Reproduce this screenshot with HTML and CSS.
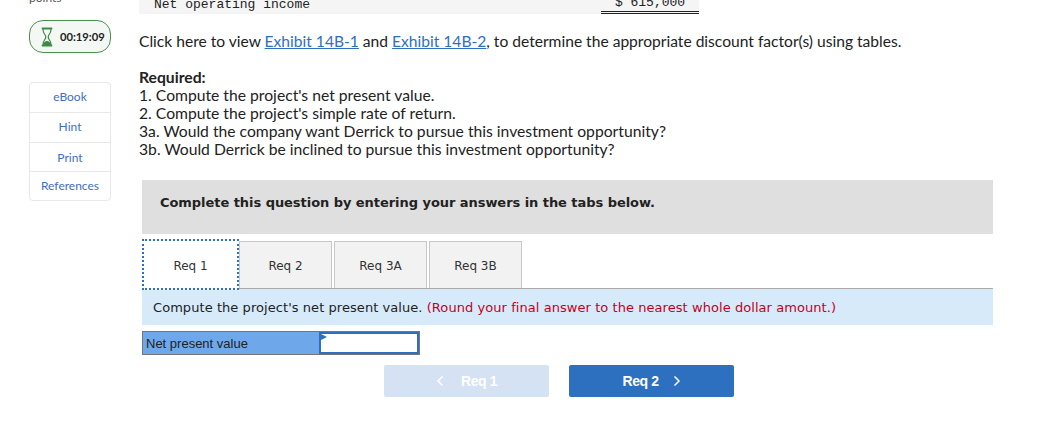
FILE: index.html
```html
<!DOCTYPE html>
<html lang="en">
<head>
    <meta charset="UTF-8">
    <title>Question</title>
    <link rel="stylesheet" href="styles.css">
</head>
<body>
    <div class="page">
        <div class="sidebar">
            <div class="points">points</div>
            <div class="timer">
                <svg class="hourglass" width="14" height="20" viewBox="0 0 14 20">
                    <path d="M2.500 1.500h9M2.500 18.500h9" stroke="#3d8a45" stroke-width="1.800" stroke-linecap="round" fill="none"/>
                    <path d="M3 2c0 2 .3 3.500 1.500 5s1.300 2 1.300 3-.1 1.500-1.300 3S3 16 3 18M11 2c0 2-.3 3.500-1.500 5s-1.300 2-1.300 3 .1 1.500 1.300 3 1.500 3 1.500 5" stroke="#3d8a45" stroke-width="1.200" fill="none"/>
                    <path d="M3 18c.3-2.500 2-3.800 4-4 2 .2 3.700 1.500 4 4z" fill="#3d8a45"/>
                </svg>
                <span>00:19:09</span>
            </div>
            <div class="tools">
                <a class="tool">eBook</a>
                <a class="tool">Hint</a>
                <a class="tool">Print</a>
                <a class="tool">References</a>
            </div>
        </div>

        <div class="main">
            <div class="income">
                <span>Net operating income</span>
                <span class="income-value">$ 615,000</span>
            </div>

            <p class="exhibits">Click here to view <a>Exhibit 14B-1</a> and <a>Exhibit 14B-2</a>, to determine the appropriate discount factor(s) using tables.</p>

            <div class="required">
                <strong>Required:</strong><br>
                1. Compute the project's net present value.<br>
                2. Compute the project's simple rate of return.<br>
                3a. Would the company want Derrick to pursue this investment opportunity?<br>
                3b. Would Derrick be inclined to pursue this investment opportunity?
            </div>

            <div class="complete">Complete this question by entering your answers in the tabs below.</div>

            <div class="tabs">
                <div class="tab active">Req 1</div>
                <div class="tab">Req 2</div>
                <div class="tab">Req 3A</div>
                <div class="tab">Req 3B</div>
            </div>

            <div class="prompt">Compute the project's net present value. <span class="note">(Round your final answer to the nearest whole dollar amount.)</span></div>

            <div class="answer">
                <div class="answer-label">Net present value</div>
                <div class="answer-input"></div>
            </div>

            <div class="nav">
                <div class="nav-btn disabled">
                    <svg width="8" height="12" viewBox="0 0 8 12"><path d="M6.500 1.500L2 6l4.500 4.500" stroke="#fff" stroke-width="1.500" fill="none"/></svg>
                    <span>Req 1</span>
                </div>
                <div class="nav-btn">
                    <span>Req 2</span>
                    <svg width="8" height="12" viewBox="0 0 8 12"><path d="M1.500 1.500L6 6l-4.500 4.500" stroke="#fff" stroke-width="1.500" fill="none"/></svg>
                </div>
            </div>
        </div>
    </div>
</body>
</html>
```

FILE: styles.css
```css
html, body {
    margin: 0;
    height: 448px;
    overflow: hidden;
    background-color: #fff;
}

body {
    font-family: Lato, "Open Sans", Arial, sans-serif;
    color: #222;
}

.page {
    display: flex;
}

.sidebar {
    width: 82px;
    margin-left: 29px;
    margin-right: 28px;
    flex-shrink: 0;
}

.points {
    height: 14px;
    margin-top: -9px;
    margin-bottom: 15px;
    font-size: 12px;
    line-height: 14px;
    color: #555;
}

.timer {
    display: flex;
    align-items: center;
    height: 31px;
    padding-left: 10px;
    gap: 6px;
    border: 1px solid #4a8f50;
    border-radius: 14px;
    background-color: #f4f8f4;
    font-size: 11.200px;
    font-weight: 700;
}

.tools {
    display: flex;
    flex-direction: column;
    margin-top: 29px;
    border: 1px solid #e8e8e8;
    border-radius: 4px;
}

.tool {
    height: 29px;
    line-height: 28px;
    text-align: center;
    font-size: 12px;
    color: #3e6fc0;
    border-bottom: 1px solid #e8e8e8;
}

.tool:nth-child(3) {
    height: 28px;
    line-height: 29px;
}

.tool:last-child {
    height: 28px;
    border-bottom: none;
}

.main {
    width: 854px;
    font-size: 15.700px;
}

.income {
    display: flex;
    justify-content: space-between;
    width: 560px;
    height: 17px;
    padding-left: 15px;
    box-sizing: border-box;
    margin-top: -3px;
    background-color: #f5f5f5;
    font-family: "Liberation Mono", monospace;
    font-size: 13px;
    line-height: 15px;
}

.income-value {
    width: 98px;
    height: 14px;
    text-align: center;
    border-bottom: 3px double #222;
    line-height: 11px;
}

.exhibits {
    margin: 18px 0 0;
    font-size: 15.600px;
    line-height: 18px;
}

.exhibits a {
    color: #2f6fbf;
    text-decoration: underline;
}

.required {
    margin-top: 18px;
    line-height: 18px;
}

.complete {
    width: 851px;
    height: 54px;
    box-sizing: border-box;
    margin: 22px 0 0 3px;
    padding: 15px 18px;
    background-color: #dfdfdf;
    font-family: "DejaVu Sans", Verdana, sans-serif;
    font-size: 13px;
    font-weight: 700;
    letter-spacing: -0.05px;
    line-height: 16px;
}

.tabs {
    display: flex;
    align-items: flex-end;
    gap: 2px;
    margin: 5px 0 0 3px;
    height: 49px;
    font-family: "DejaVu Sans", Verdana, sans-serif;
    font-size: 12px;
}

.tab {
    width: 93px;
    height: 47px;
    box-sizing: border-box;
    line-height: 48px;
    text-align: center;
    border: 1px solid #c8c8c8;
    border-bottom: none;
    background-color: #f2f2f2;
    color: #333;
}

.tab.active {
    position: relative;
    width: 97px;
    height: 51px;
    margin-bottom: -2px;
    margin-right: -2px;
    line-height: 50px;
    background-color: #fff;
    border: 2px dotted #2f6fbf;
}

.prompt {
    width: 851px;
    height: 37px;
    box-sizing: border-box;
    margin-left: 3px;
    padding-left: 11px;
    border-top: 1px solid #aaa;
    background-color: #d7eafa;
    font-family: "DejaVu Sans", Verdana, sans-serif;
    font-size: 13px;
    letter-spacing: 0.06px;
    line-height: 38px;
    color: #222;
}

.note {
    color: #c4001a;
}

.answer {
    display: flex;
    width: 278px;
    height: 24px;
    box-sizing: border-box;
    margin: 6px 0 0 3px;
    border: 1px solid #777;
    font-family: "Liberation Sans", Arial, sans-serif;
    font-size: 13px;
    line-height: 24px;
}

.answer-label {
    width: 176px;
    padding-left: 3px;
    box-sizing: border-box;
    background-color: #6fa8ea;
}

.answer-input {
    flex: 1;
    border: 2px solid #2f6fbf;
    position: relative;
}

.answer-input::before {
    content: "";
    position: absolute;
    left: 0;
    top: 0;
    border-left: 6px solid #2f6fbf;
    border-top: 3px solid transparent;
    border-bottom: 3px solid transparent;
}

.nav {
    display: flex;
    gap: 20px;
    margin: 10px 0 0 245px;
}

.nav-btn {
    display: flex;
    align-items: center;
    justify-content: center;
    gap: 14px;
    width: 165px;
    height: 32px;
    border-radius: 2px;
    background-color: #2d70c0;
    color: #fff;
    font-family: "Liberation Sans", Arial, sans-serif;
    font-size: 14px;
    font-weight: 700;
    letter-spacing: -0.4px;
}

.nav-btn.disabled {
    gap: 17px;
    background-color: #d5e2f3;
}
```
